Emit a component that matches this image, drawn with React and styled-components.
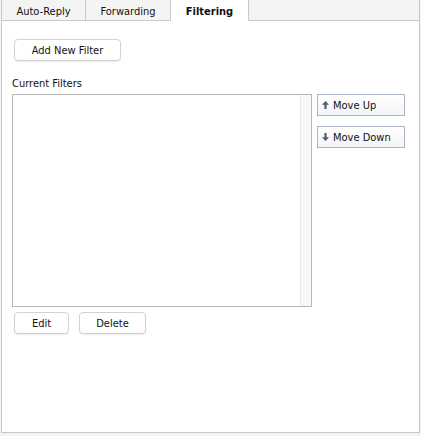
import React from 'react';
import styled, { createGlobalStyle } from 'styled-components';

const GlobalStyle = createGlobalStyle`
  html, body {
    margin: 0;
    padding: 0;
    background: #f4f4f4;
  }
  body {
    font-family: "DejaVu Sans Condensed", "DejaVu Sans", Verdana, sans-serif;
    font-stretch: semi-condensed;
    font-size: 11px;
    color: #111;
  }
`;

const Frame = styled.div`
  margin-left: 1px;
  width: 419px;
`;

const TabBar = styled.div`
  display: flex;
  height: 21px;
  border-left: 1px solid #c8c8c8;
`;

const Tab = styled.div`
  box-sizing: border-box;
  width: ${p => p.width}px;
  height: 21px;
  display: flex;
  align-items: center;
  justify-content: center;
  padding-top: 2px;
  background: ${p => (p.active ? '#fff' : '#f4f4f4')};
  border-right: 1px solid #c8c8c8;
  border-bottom: 1px solid ${p => (p.active ? '#fff' : '#c8c8c8')};
  font-weight: ${p => (p.active ? 'bold' : 'normal')};
  color: #111;
`;

const TabFiller = styled.div`
  flex: 1;
  background: #f4f4f4;
  border-bottom: 1px solid #c8c8c8;
  border-right: 1px solid #c8c8c8;
`;

const Panel = styled.div`
  box-sizing: border-box;
  height: 412px;
  background: #fff;
  border: 1px solid #c8c8c8;
  border-top: none;
  padding: 18px 0 0 10px;
  display: flex;
  flex-direction: column;
  align-items: flex-start;
`;

const SoftButton = styled.button`
  box-sizing: border-box;
  width: ${p => p.width}px;
  height: 22px;
  margin-left: 2px;
  padding: 0;
  font-family: inherit;
  font-stretch: inherit;
  font-size: 11px;
  color: #111;
  background: #fff;
  border: 1px solid #d2d2d2;
  border-radius: 4px;
  box-shadow: 0 1px 1px rgba(0, 0, 0, 0.08);
`;

const Label = styled.div`
  margin-top: 16px;
  height: 14px;
  line-height: 14px;
`;

const ListRow = styled.div`
  display: flex;
  gap: 5px;
  margin-top: 3px;
`;

const ListBox = styled.div`
  box-sizing: border-box;
  width: 300px;
  height: 213px;
  border: 1px solid #b8b8b8;
  background: #fff;
  display: flex;
  justify-content: flex-end;
`;

const ScrollTrack = styled.div`
  width: 10px;
  background: #f7f7f7;
  border-left: 1px solid #e8e8e8;
`;

const SideColumn = styled.div`
  display: flex;
  flex-direction: column;
  gap: 10px;
`;

const MoveButton = styled.button`
  box-sizing: border-box;
  width: 88px;
  height: 22px;
  padding: 0 0 0 4px;
  display: flex;
  align-items: center;
  gap: 4px;
  font-family: inherit;
  font-stretch: inherit;
  font-size: 11px;
  color: #111;
  background: linear-gradient(#ffffff, #f3f4f6);
  border: 1px solid #a9b4c4;
  border-radius: 0;
`;

const ActionRow = styled.div`
  display: flex;
  gap: 8px;
  margin-top: 5px;
`;

const Arrow = ({ down }) => (
  <svg width="7" height="8" viewBox="0 0 7 8" style={{ transform: down ? 'rotate(180deg)' : 'none' }}>
    <path d="M3.5 0 L7 3.8 L4.6 3.8 L4.6 8 L2.4 8 L2.4 3.8 L0 3.8 Z" fill="#4a5b76" />
  </svg>
);

export default function App() {
  return (
    <>
      <GlobalStyle />
      <Frame>
        <TabBar>
          <Tab width={84}>Auto-Reply</Tab>
          <Tab width={85}>Forwarding</Tab>
          <Tab width={78} active>Filtering</Tab>
          <TabFiller />
        </TabBar>
        <Panel>
          <SoftButton width={107}>Add New Filter</SoftButton>
          <Label>Current Filters</Label>
          <ListRow>
            <ListBox>
              <ScrollTrack />
            </ListBox>
            <SideColumn>
              <MoveButton>
                <Arrow />
                Move Up
              </MoveButton>
              <MoveButton>
                <Arrow down />
                Move Down
              </MoveButton>
            </SideColumn>
          </ListRow>
          <ActionRow>
            <SoftButton width={55}>Edit</SoftButton>
            <SoftButton width={67}>Delete</SoftButton>
          </ActionRow>
        </Panel>
      </Frame>
    </>
  );
}
